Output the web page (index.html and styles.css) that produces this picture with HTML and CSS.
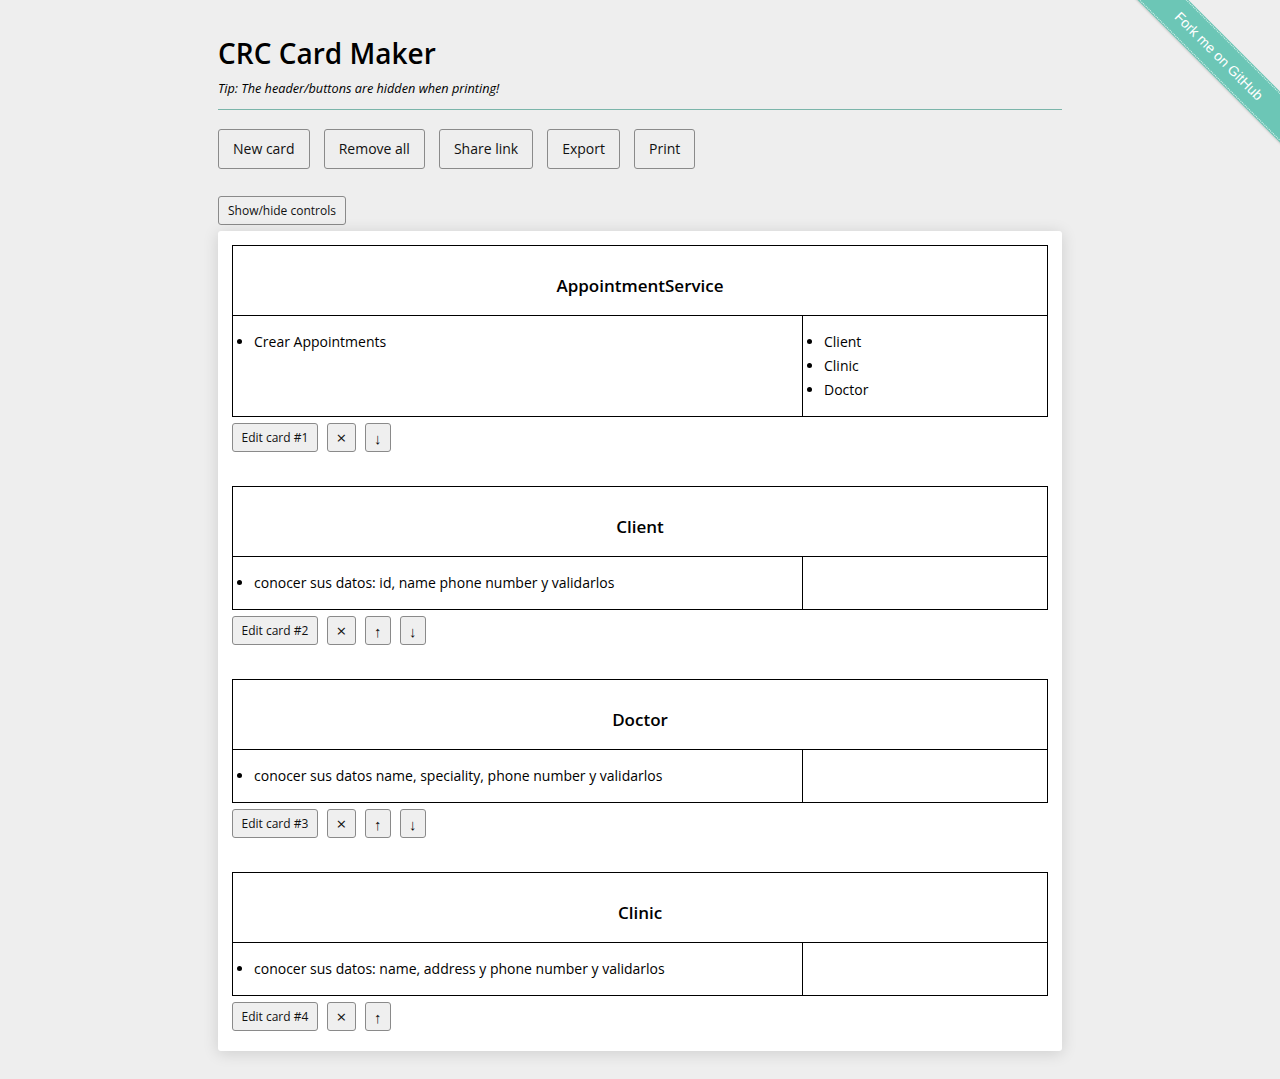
FILE: index.html
```html
<!DOCTYPE html>
<html lang="en">
<head>
<meta charset="utf-8">
<title>CRC Card Maker</title>
<link rel="stylesheet" href="styles.css">
</head>
<body>
<div class="ribbon-wrap">
  <a class="ribbon" href="#">Fork me on GitHub</a>
</div>
<div class="page">
  <header class="header">
    <h1 class="title">CRC Card Maker</h1>
    <p class="tip">Tip: The header/buttons are hidden when printing!</p>
  </header>
  <div class="toolbar">
    <button class="btn">New card</button>
    <button class="btn">Remove all</button>
    <button class="btn">Share link</button>
    <button class="btn">Export</button>
    <button class="btn">Print</button>
  </div>
  <button class="btn-small toggle">Show/hide controls</button>
  <main class="panel">
    <section class="card-block">
      <div class="card">
        <div class="card-head">AppointmentService</div>
        <div class="card-body">
          <ul class="resp"><li>Crear Appointments</li></ul>
          <ul class="collab"><li>Client</li><li>Clinic</li><li>Doctor</li></ul>
        </div>
      </div>
      <div class="controls">
        <button class="btn-small edit">Edit card #1</button>
        <button class="btn-small icon">×</button>
        <button class="btn-small icon arrow">↓</button>
      </div>
    </section>
    <section class="card-block">
      <div class="card">
        <div class="card-head">Client</div>
        <div class="card-body">
          <ul class="resp"><li>conocer sus datos: id, name phone number y validarlos</li></ul>
          <ul class="collab"></ul>
        </div>
      </div>
      <div class="controls">
        <button class="btn-small edit">Edit card #2</button>
        <button class="btn-small icon">×</button>
        <button class="btn-small icon arrow">↑</button>
        <button class="btn-small icon arrow">↓</button>
      </div>
    </section>
    <section class="card-block">
      <div class="card">
        <div class="card-head">Doctor</div>
        <div class="card-body">
          <ul class="resp"><li>conocer sus datos name, speciality, phone number y validarlos</li></ul>
          <ul class="collab"></ul>
        </div>
      </div>
      <div class="controls">
        <button class="btn-small edit">Edit card #3</button>
        <button class="btn-small icon">×</button>
        <button class="btn-small icon arrow">↑</button>
        <button class="btn-small icon arrow">↓</button>
      </div>
    </section>
    <section class="card-block">
      <div class="card">
        <div class="card-head">Clinic</div>
        <div class="card-body">
          <ul class="resp"><li>conocer sus datos: name, address y phone number y validarlos</li></ul>
          <ul class="collab"></ul>
        </div>
      </div>
      <div class="controls">
        <button class="btn-small edit">Edit card #4</button>
        <button class="btn-small icon">×</button>
        <button class="btn-small icon arrow">↑</button>
      </div>
    </section>
  </main>
</div>
</body>
</html>
```
FILE: styles.css
```css
* { box-sizing: border-box; }
html, body { margin: 0; padding: 0; }
body {
  background: #eeeeee;
  font-family: "Open Sans", "Noto Sans", sans-serif;
  color: #000;
}
.page {
  width: 844px;
  margin: 0 auto;
  padding: 0 0 28px;
}
.header {
  padding-top: 35px;
  border-bottom: 1px solid #7bb5aa;
  padding-bottom: 13px;
}
.title {
  margin: 0;
  font-size: 28px;
  font-weight: 600;
  line-height: 36px;
}
.tip {
  margin: 9px 0 0;
  font-size: 12.7px;
  font-style: italic;
  line-height: 16px;
}
.toolbar {
  display: flex;
  gap: 14px;
  margin-top: 19px;
}
.btn {
  height: 40px;
  padding: 0 14px 1px;
  font-family: inherit;
  font-size: 14px;
  background: #eeeeee;
  border: 1px solid #8a8a8a;
  border-radius: 3px;
  color: #111;
}
.btn-small {
  height: 29px;
  padding: 0 9px;
  font-family: inherit;
  font-size: 12px;
  background: #efefef;
  border: 1px solid #8a8a8a;
  border-radius: 3px;
  color: #111;
}
.edit { padding: 0 8.5px; }
.toggle { margin-top: 27px; display: block; }
.panel {
  margin-top: 6px;
  background: #fff;
  border-radius: 3px;
  box-shadow: 0 2px 16px rgba(0,0,0,0.14);
  padding: 14px 14px 20px;
}
.card-block { margin-bottom: 34px; }
.card-block:last-child { margin-bottom: 0; }
.card { border: 1px solid #000; }
.card-head {
  height: 70px;
  border-bottom: 1px solid #000;
  display: flex;
  align-items: center;
  justify-content: center;
  padding-top: 9px;
  font-size: 17px;
  font-weight: 600;
}
.card-body {
  display: grid;
  grid-template-columns: 570px 1fr;
}
.card-body ul {
  margin: 0;
  padding: 14px 0 14px 21px;
  font-size: 14px;
  line-height: 24px;
}
.card-body li { padding-left: 0; }
.resp { border-right: 1px solid #000; }
.controls {
  display: flex;
  gap: 9px;
  margin-top: 6px;
}
.icon { width: 29px; padding: 0; font-size: 17px; font-weight: 400; color: #111; }
.arrow { width: 26px; font-size: 15px; color: #111; }
.ribbon-wrap {
  position: absolute;
  top: 0;
  right: 0;
  width: 150px;
  height: 150px;
  overflow: hidden;
}
.ribbon {
  position: absolute;
  left: -41px;
  top: 38px;
  width: 260px;
  height: 36px;
  transform: rotate(45deg);
  background: #6cc6b6;
  color: #fff;
  text-decoration: none;
  font-family: "Liberation Sans", Arial, sans-serif;
  font-size: 14px;
  display: flex;
  align-items: center;
  justify-content: center;
  box-shadow: 0 1px 2px rgba(0,0,0,0.15);
}
.ribbon::before {
  content: "";
  position: absolute;
  left: 0; right: 0;
  top: 1px; bottom: 1px;
  border-top: 1px dotted rgba(255,255,255,0.8);
  border-bottom: 1px dotted rgba(255,255,255,0.8);
}
```
